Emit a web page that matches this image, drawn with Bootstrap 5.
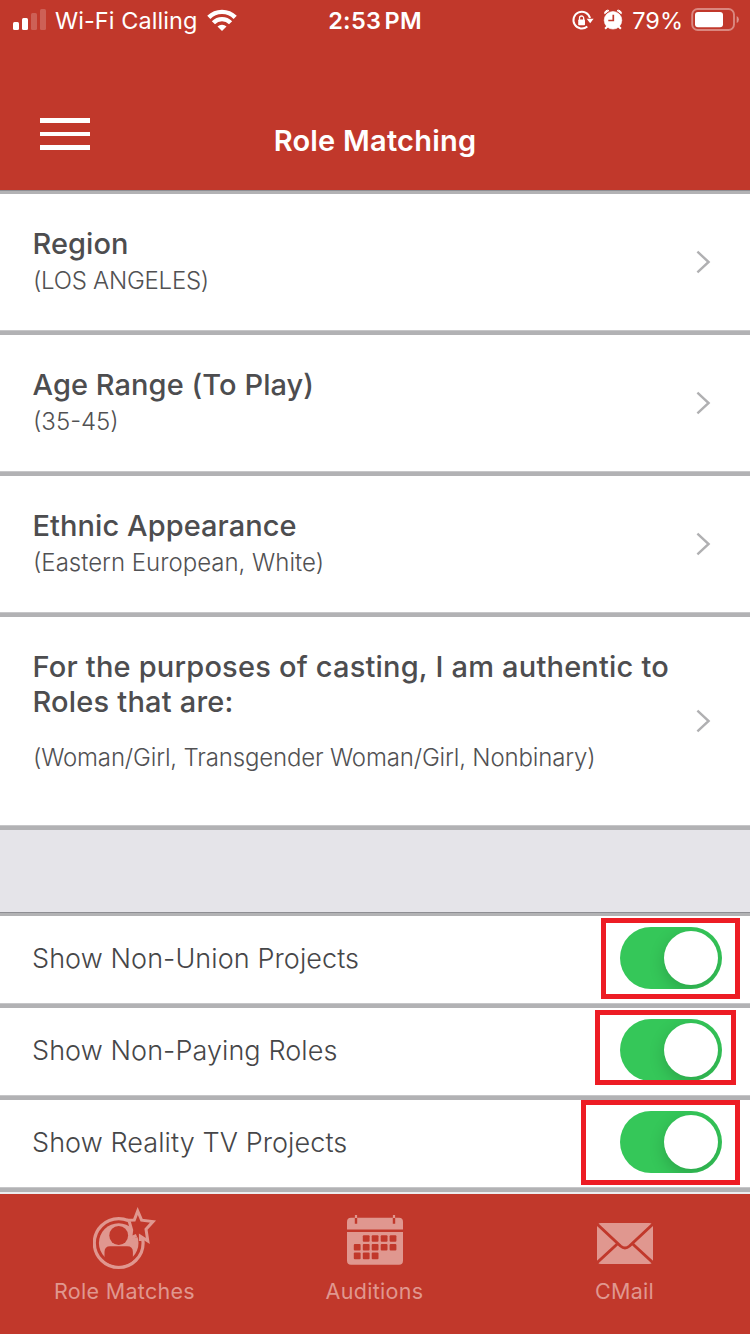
<!DOCTYPE html>
<html lang="en">
<head>
<meta charset="utf-8">
<meta name="viewport" content="width=device-width, initial-scale=1">
<title>Role Matching</title>
<link href="https://cdn.jsdelivr.net/npm/bootstrap@5.3.0/dist/css/bootstrap.min.css" rel="stylesheet">
<style>
  :root { --brand: #c1382b; --rule: #b2b2b4; --rule-light: #c6c6c8; --tab: #e0978f; }
  body { font-family: Inter, "Liberation Sans", sans-serif; color: #4d4d4f; background: #fff; height: 1334px; overflow: hidden; }
  svg { display: block; flex: none; }
  .app-header { background: var(--brand); height: 190px; }
  .status-bar { height: 41px; font-size: 23.5px; line-height: 41px; padding: 0 11px 0 13px; }
  .status-bar > div { flex: 1 1 0; }
  .status-bar .clock { flex: 0 0 auto; font-weight: 600; word-spacing: -3px; letter-spacing: .3px; margin: 0 1px 0 -1px; }
  .carrier { margin: 0 10px 0 8px; letter-spacing: .07px; }
  .level { margin: 0 8px; }
  .title-bar { height: 149px; }
  .title-bar h1 { font-size: 29px; font-weight: 600; line-height: 36px; margin: 0; padding-top: 82px; letter-spacing: .23px; }
  .menu-btn { left: 40px; top: 77px; width: 50px; height: 32px; }
  .menu-btn i { height: 4.6px; background: #fff; }
  .edge-top { height: 4px; background: var(--rule); border-top: 1px solid #8e8e93; }
  .pref-row { height: 141px; padding: 31.5px 38px 0 32.5px; border-bottom: 4px solid var(--rule); box-shadow: inset 0 -1px var(--rule-light); }
  .pref-row.tall { height: 213px; }
  .pref-row h2 { font-size: 29px; font-weight: 500; line-height: 35px; margin: 0; letter-spacing: .07px; }
  .pref-row p { font-size: 24px; font-weight: 300; line-height: 39px; margin: 0; padding-left: .5px; color: #515153; }
  .pref-row.tall h2 { letter-spacing: .2px; }
  .pref-row.tall p { margin-top: 19px; letter-spacing: -.16px; }
  .pref-row p.caps { letter-spacing: -.25px; }
  .chev { right: 39px; top: 56px; }
  .tall .chev { top: 92px; }
  .spacer { height: 82px; background: #e5e4e9; }
  .switch-row { height: 92px; padding: 0 28px 3px 32px; border-bottom: 4px solid var(--rule); box-shadow: inset 0 -1px var(--rule-light); font-size: 27px; font-weight: 300; letter-spacing: .08px; color: #464648; }
  .switch-row > span:first-child { padding-top: 2px; }
  .toggle { width: 102px; height: 62px; border-radius: 31px; background: #35c759; padding: 4px; overflow: hidden; margin-bottom: 1px; }
  .knob { width: 54px; height: 54px; border-radius: 50%; background: #fff; box-shadow: 0 5px 16px rgba(0,0,0,.18); }
  .callout { border: 5px solid #ed1c24; }
  .co-1 { left: 601px; top: 2px; width: 139px; height: 81px; }
  .co-2 { left: 595px; top: 2px; width: 141px; height: 75px; }
  .co-3 { left: 581px; top: 0; width: 159px; height: 85px; }
  .tabs { background: var(--brand); border-top: 2px solid #ececee; height: 142px; padding-top: 12px; color: var(--tab); font-size: 21.5px; line-height: 32px; letter-spacing: .3px; }
  .tabs a { color: inherit; gap: 5px; }
  .tabs span { padding-right: 1px; }
</style>
</head>
<body>
<header class="app-header text-white">
  <div class="status-bar d-flex">
    <div class="d-flex align-items-center">
      <svg width="34" height="41" viewBox="13 0 34 41" fill="#fff"><rect x="13" y="22" width="6" height="8" rx="1.5"/><rect x="22" y="18" width="6" height="12" rx="1.5"/><g opacity=".2"><rect x="31" y="13" width="6" height="17" rx="1.5"/><rect x="40" y="9" width="6" height="21" rx="1.5"/></g></svg>
      <span class="carrier">Wi-Fi Calling</span>
      <svg width="30" height="41" viewBox="207.500 0 30 41" fill="none" stroke="#fff" stroke-width="4.400"><path d="M209.300 17.400A18.500 18.500 0 0 1 235.700 17.400"/><path d="M213.900 22.800A12 12 0 0 1 231.100 22.800"/><path d="M222.500 31l-4.500-4.500a6.400 6.400 0 0 1 9 0z" fill="#fff" stroke="none"/></svg>
    </div>
    <div class="clock">2:53 PM</div>
    <div class="d-flex justify-content-end align-items-center">
      <svg width="53" height="41" viewBox="571 0 53 41">
        <path d="M590 18A8.400 8.400 0 1 0 587.300 26.500" fill="none" stroke="#fff" stroke-width="2"/>
        <path d="M586.600 18.700h7l-3.400 4.500z" fill="#fff"/>
        <rect x="578.200" y="19.400" width="6.800" height="5.800" rx=".8" fill="#fff"/>
        <path d="M579.500 20v-1.900a2.100 2.100 0 0 1 4.200 0v1.900" fill="none" stroke="#fff" stroke-width="1.300"/>
        <g fill="#fff" stroke="#fff"><circle cx="613" cy="20.300" r="8.800" stroke-width=".6"/><path d="M607.600 26.300l-2.500 2.500M618.400 26.300l2.500 2.500" stroke-width="2"/><path d="M604.700 13.700a3 3 0 0 1 4.300-3.200zM621.300 13.700a3 3 0 0 0-4.300-3.200z" stroke-width="1"/></g>
        <path d="M613.300 14.800v5.700h-5" fill="none" stroke="#c1382b" stroke-width="1.700"/>
      </svg>
      <span class="level">79%</span>
      <svg width="48" height="41" viewBox="691 0 48 41"><rect x="692.200" y="9" width="41.800" height="21" rx="5.500" fill="none" stroke="#fff" stroke-width="1.900" opacity=".4"/><rect x="695" y="12" width="28" height="15.200" rx="3" fill="#fff"/><path d="M736.700 16q2.200 1 2.200 3.500t-2.200 3.500z" fill="#fff" opacity=".45"/></svg>
    </div>
  </div>
  <div class="title-bar position-relative text-center">
    <div class="menu-btn position-absolute d-flex flex-column justify-content-between" role="button" aria-label="Menu"><i></i><i></i><i></i></div>
    <h1>Role Matching</h1>
  </div>
</header>
<div class="edge-top"></div>
<main>
  <section class="pref-row position-relative"><h2>Region</h2><p class="caps">(LOS ANGELES)</p>
    <svg class="chev position-absolute" width="15" height="24" fill="none" stroke="#b0b0b2" stroke-width="2.400"><path d="M1.400 1.600L12.600 12 1.400 22.400"/></svg></section>
  <section class="pref-row position-relative"><h2>Age Range (To Play)</h2><p>(35-45)</p>
    <svg class="chev position-absolute" width="15" height="24" fill="none" stroke="#b0b0b2" stroke-width="2.400"><path d="M1.400 1.600L12.600 12 1.400 22.400"/></svg></section>
  <section class="pref-row position-relative"><h2>Ethnic Appearance</h2><p>(Eastern European, White)</p>
    <svg class="chev position-absolute" width="15" height="24" fill="none" stroke="#b0b0b2" stroke-width="2.400"><path d="M1.400 1.600L12.600 12 1.400 22.400"/></svg></section>
  <section class="pref-row tall position-relative"><h2>For the purposes of casting, I am authentic to<br>Roles that are:</h2><p>(Woman/Girl, Transgender Woman/Girl, Nonbinary)</p>
    <svg class="chev position-absolute" width="15" height="24" fill="none" stroke="#b0b0b2" stroke-width="2.400"><path d="M1.400 1.600L12.600 12 1.400 22.400"/></svg></section>
  <div class="spacer"></div>
  <div class="edge-top"></div>
  <div class="switch-row position-relative d-flex align-items-center justify-content-between"><span>Show Non-Union Projects</span><div class="toggle d-flex justify-content-end"><div class="knob"></div></div><div class="callout co-1 position-absolute"></div></div>
  <div class="switch-row position-relative d-flex align-items-center justify-content-between"><span>Show Non-Paying Roles</span><div class="toggle d-flex justify-content-end"><div class="knob"></div></div><div class="callout co-2 position-absolute"></div></div>
  <div class="switch-row position-relative d-flex align-items-center justify-content-between"><span>Show Reality TV Projects</span><div class="toggle d-flex justify-content-end"><div class="knob"></div></div><div class="callout co-3 position-absolute"></div></div>
</main>
<nav class="tabs row g-0 text-center">
  <a class="col-4 d-flex flex-column align-items-center text-decoration-none" role="button">
    <svg width="64" height="64" viewBox="0 0 64 64">
      <circle cx="25.700" cy="37" r="24.400" fill="none" stroke="#e0978f" stroke-width="3.200"/>
      <circle cx="25.700" cy="37" r="19.800" fill="#e0978f"/>
      <circle cx="25.700" cy="29.500" r="9.400" fill="#c1382b"/>
      <path d="M11.500 54.500V46q0-5.700 5.700-5.700h17q5.700 0 5.700 5.700v8.500Q33 59.500 25.700 59.500T11.500 54.500z" fill="#c1382b"/>
      <path d="M44.700 5L48.600 14.200 60 15.600 53 23.300 54.800 35 47 30.500 38.500 32.500 38.700 24 34.500 15 41.500 14z" fill="#c1382b"/>
      <path d="M34 14.200L41.300 14 44.700 5 48.600 14.200 60 15.600 53 23.300 54.800 35 47.400 30.300V35M36 14.600L38.700 24 37.700 32 43.500 29.500" fill="none" stroke="#e0978f" stroke-width="3"/>
    </svg>
    <span>Role Matches</span>
  </a>
  <a class="col-4 d-flex flex-column align-items-center text-decoration-none" role="button">
    <svg width="56" height="64" viewBox="0 0 56 64">
      <rect y="11.700" width="56" height="47" rx="4" fill="#e0978f"/>
      <path d="M0 24.800h56M9 11.700v6M47 11.700v6" stroke="#c1382b" stroke-width="2.400"/>
      <path d="M9 9v3M47 9v3" stroke="#e0978f" stroke-width="2.200"/>
      <g fill="#c1382b">
        <rect x="15.800" y="29.200" width="6.800" height="6.600" rx="1"/><rect x="24.700" y="29.200" width="6.800" height="6.600" rx="1"/><rect x="33.700" y="29.200" width="6.800" height="6.600" rx="1"/><rect x="42.600" y="29.200" width="6.800" height="6.600" rx="1"/>
        <rect x="6.800" y="37.900" width="6.800" height="6.600" rx="1"/><rect x="15.800" y="37.900" width="6.800" height="6.600" rx="1"/><rect x="24.700" y="37.900" width="6.800" height="6.600" rx="1"/><rect x="33.700" y="37.900" width="6.800" height="6.600" rx="1"/><rect x="42.600" y="37.900" width="6.800" height="6.600" rx="1"/>
        <rect x="6.800" y="46.600" width="6.800" height="6.600" rx="1"/><rect x="15.800" y="46.600" width="6.800" height="6.600" rx="1"/><rect x="24.700" y="46.600" width="6.800" height="6.600" rx="1"/>
      </g>
    </svg>
    <span>Auditions</span>
  </a>
  <a class="col-4 d-flex flex-column align-items-center text-decoration-none" role="button">
    <svg width="56" height="64" viewBox="0 0 56 64">
      <rect y="17" width="56" height="41" rx="4" fill="#e0978f"/>
      <path d="M0 18L23.500 40Q28 44 32.500 40L56 18M0 56.700L20 38.300M56 56.700L36 38.300" fill="none" stroke="#c1382b" stroke-width="2.900"/>
    </svg>
    <span>CMail</span>
  </a>
</nav>
</body>
</html>
